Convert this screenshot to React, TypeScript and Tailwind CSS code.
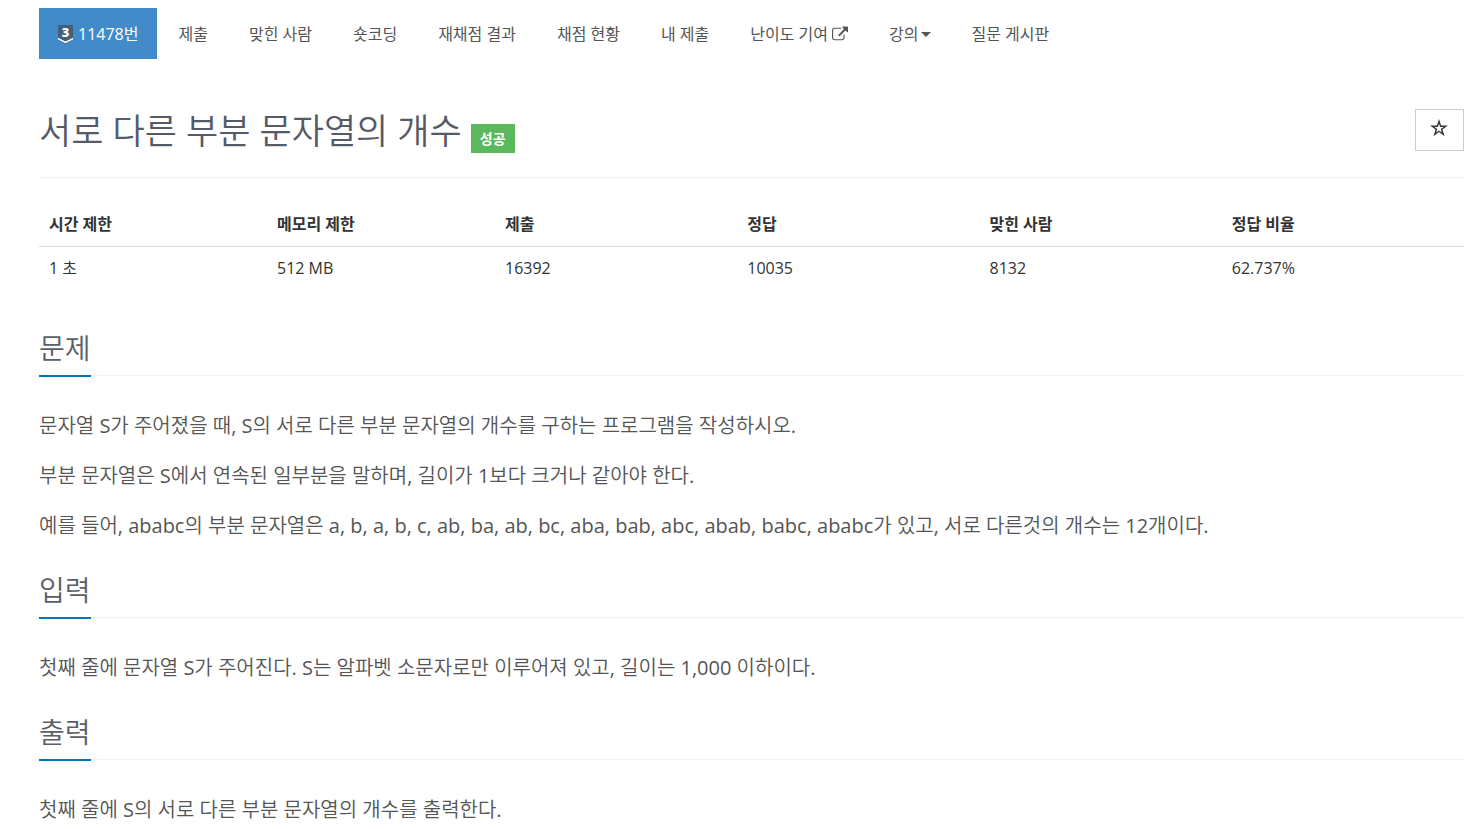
import type { ReactNode } from "react";

function TierBadge() {
  return (
    <svg className="mt-0.5 mr-[5px] h-[19px] w-[15px] shrink-0 overflow-visible" viewBox="0 0 15 19" aria-hidden="true">
      <path d="M0 0H15V15L7.5 19L0 15Z" fill="#435f7a" />
      <path d="M0 12.8L7.5 16.4L15 12.8V14.6L7.5 18.2L0 14.6Z" fill="#fff" />
      <text x="7.5" y="11.6" textAnchor="middle" fontSize="13" className="fill-white font-extrabold">
        3
      </text>
    </svg>
  );
}

function ExternalLinkIcon() {
  return (
    <svg className="ml-1 size-4 shrink-0" viewBox="0 64 1792 1536" fill="currentColor" aria-hidden="true">
      <path d="M1408 928v320q0 119-84.5 203.5t-203.5 84.5h-832q-119 0-203.5-84.5t-84.5-203.5v-832q0-119 84.5-203.5t203.5-84.5h704q14 0 23 9t9 23v64q0 14-9 23t-23 9h-704q-66 0-113 47t-47 113v832q0 66 47 113t113 47h832q66 0 113-47t47-113v-320q0-14 9-23t23-9h64q14 0 23 9t9 23zm384-864v512q0 26-19 45t-45 19-45-19l-176-176-652 652q-10 10-23 10t-23-10l-114-114q-10-10-10-23t10-23l652-652-176-176q-19-19-19-45t19-45 45-19h512q26 0 45 19t19 45z" />
    </svg>
  );
}

function CaretIcon() {
  return (
    <svg className="mt-0.5 ml-0.5 h-[5px] w-[10px] shrink-0" viewBox="0 0 10 5" fill="currentColor" aria-hidden="true">
      <path d="M0 0H10L5 5Z" />
    </svg>
  );
}

function StarIcon() {
  return (
    <svg className="size-[18px]" viewBox="0 0 18 18" fill="currentColor" fillRule="evenodd" aria-hidden="true">
      <path d="M9 0L11.1 6.5H18L12.4 10.5L14.6 17.2L9 13.1L3.4 17.2L5.6 10.5L0 6.5H6.9ZM9 4.4L7.9 8H4.4L7.3 10.1L6.2 13.4L9 11.4L11.8 13.4L10.7 10.1L13.6 8H10.1Z" />
    </svg>
  );
}

const tabs: { label: string; icon?: ReactNode }[] = [
  { label: "제출" },
  { label: "맞힌 사람" },
  { label: "숏코딩" },
  { label: "재채점 결과" },
  { label: "채점 현황" },
  { label: "내 제출" },
  { label: "난이도 기여", icon: <ExternalLinkIcon /> },
  { label: "강의", icon: <CaretIcon /> },
  { label: "질문 게시판" },
];

const sections = [
  {
    title: "문제",
    body: [
      "문자열 S가 주어졌을 때, S의 서로 다른 부분 문자열의 개수를 구하는 프로그램을 작성하시오.",
      "부분 문자열은 S에서 연속된 일부분을 말하며, 길이가 1보다 크거나 같아야 한다.",
      "예를 들어, ababc의 부분 문자열은 a, b, a, b, c, ab, ba, ab, bc, aba, bab, abc, abab, babc, ababc가 있고, 서로 다른것의 개수는 12개이다.",
    ],
  },
  {
    title: "입력",
    body: ["첫째 줄에 문자열 S가 주어진다. S는 알파벳 소문자로만 이루어져 있고, 길이는 1,000 이하이다."],
  },
  { title: "출력", body: ["첫째 줄에 S의 서로 다른 부분 문자열의 개수를 출력한다."] },
];

const stats = [
  { name: "시간 제한", value: "1 초", width: "w-[16%]" },
  { name: "메모리 제한", value: "512 MB", width: "w-[16%]" },
  { name: "제출", value: "16392", width: "w-[17%]" },
  { name: "정답", value: "10035", width: "w-[17%]" },
  { name: "맞힌 사람", value: "8132", width: "w-[17%]" },
  { name: "정답 비율", value: "62.737%", width: "w-[17%]" },
];

export default function App() {
  return (
    <main className="bg-white pt-2 pr-[17px] pl-[39px] font-['Open_Sans','Noto_Sans_CJK_KR',sans-serif] text-base text-[#333]">
      <nav className="flex gap-[3px]">
        <a href="#problem" className="flex h-[51px] shrink-0 items-center bg-[#428bca] px-[19px] text-white">
          <TierBadge />
          11478번
        </a>
        <ul className="flex flex-wrap gap-[5px]">
          {tabs.map((tab) => (
            <li key={tab.label}>
              <a href="#tab" className="flex h-[51px] items-center px-[18px] text-[#555]">
                {tab.label}
                {tab.icon}
              </a>
            </li>
          ))}
        </ul>
      </nav>

      <header className="mt-[50px] flex items-start justify-between border-b border-[#eee] pb-6">
        <div className="flex items-end gap-[9px]">
          <h1 className="text-[35px] leading-[44px] font-[350] text-[#555b66]">서로 다른 부분 문자열의 개수</h1>
          <span className="bg-[#5cb85c] px-[9px] py-1 text-[14px] leading-[21px] font-bold text-white">성공</span>
        </div>
        <button type="button" aria-label="즐겨찾기" className="flex h-[42px] w-[49px] items-center justify-center border border-[#ccc] pr-0.5 pb-1 text-[#333]">
          <StarIcon />
        </button>
      </header>

      <table className="mt-6 w-full table-fixed border-collapse text-left">
        <thead>
          <tr className="border-b border-[#ddd]">
            {stats.map((s) => (
              <th key={s.name} className={`${s.width} px-[10px] py-[10px] leading-6 font-bold`}>
                {s.name}
              </th>
            ))}
          </tr>
        </thead>
        <tbody>
          <tr>
            {stats.map((s) => (
              <td key={s.name} className="px-[10px] pt-[9px] pb-[10px] font-['Open_Sans','Noto_Sans_CJK_KR_DemiLight','Noto_Sans_CJK_KR',sans-serif] leading-6">
                {s.value}
              </td>
            ))}
          </tr>
        </tbody>
      </table>

      <div className="mt-[39px] flex flex-col gap-[29px]">
        {sections.map((s) => (
          <section key={s.title}>
            <div className="border-b border-dotted border-[#dde3ea]">
              <h2 className="-mb-0.5 inline-block border-b-2 border-[#0076bd] pb-2 align-top text-[28px] leading-[38px] font-[350] text-[#585f69]">
                {s.title}
              </h2>
            </div>
            <div className="mt-[34px] flex flex-col gap-[18px] font-['Open_Sans','Noto_Sans_CJK_KR_DemiLight','Noto_Sans_CJK_KR',sans-serif] text-[20px] leading-8 text-[#555]">
              {s.body.map((p) => (
                <p key={p}>{p}</p>
              ))}
            </div>
          </section>
        ))}
      </div>
    </main>
  );
}
